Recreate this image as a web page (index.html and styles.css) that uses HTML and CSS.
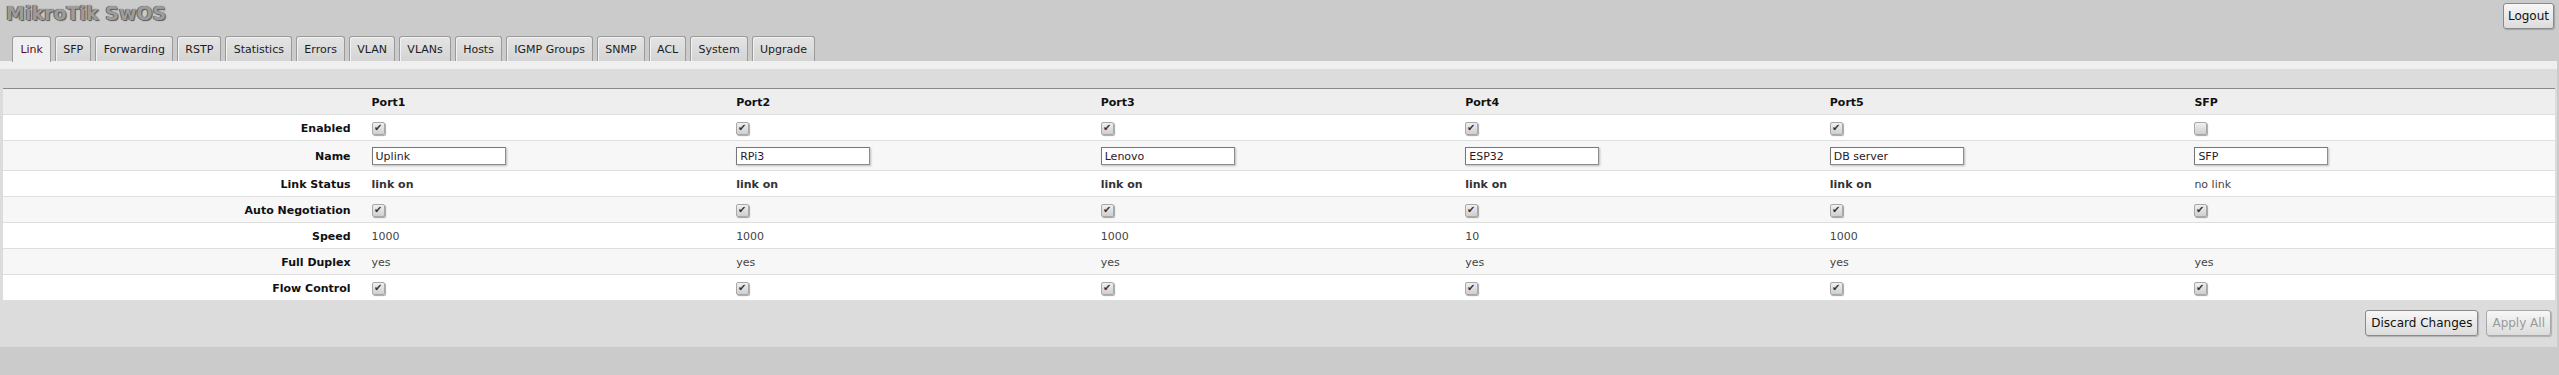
FILE: index.html
```html
<!DOCTYPE html>
<html lang="en">
<head>
  <meta charset="UTF-8" />
  <title>MikroTik SwOS</title>
  <link rel="stylesheet" href="styles.css">
</head>
<body>
  <div class="header">
    <div class="title">MikroTik SwOS</div>
    <button class="btn logout">Logout</button>
  </div>

  <div class="tabs">
    <a class="tab active">Link</a>
    <a class="tab">SFP</a>
    <a class="tab">Forwarding</a>
    <a class="tab">RSTP</a>
    <a class="tab">Statistics</a>
    <a class="tab">Errors</a>
    <a class="tab">VLAN</a>
    <a class="tab">VLANs</a>
    <a class="tab">Hosts</a>
    <a class="tab">IGMP Groups</a>
    <a class="tab">SNMP</a>
    <a class="tab">ACL</a>
    <a class="tab">System</a>
    <a class="tab">Upgrade</a>
  </div>

  <div class="panel">
    <table class="grid">
      <thead>
        <tr>
          <th class="label"></th>
          <th>Port1</th>
          <th>Port2</th>
          <th>Port3</th>
          <th>Port4</th>
          <th>Port5</th>
          <th>SFP</th>
        </tr>
      </thead>
      <tbody>
        <tr>
          <td class="label">Enabled</td>
          <td><input type="checkbox" checked></td>
          <td><input type="checkbox" checked></td>
          <td><input type="checkbox" checked></td>
          <td><input type="checkbox" checked></td>
          <td><input type="checkbox" checked></td>
          <td><input type="checkbox"></td>
        </tr>
        <tr class="name-row">
          <td class="label">Name</td>
          <td><input type="text" class="name" value="Uplink"></td>
          <td><input type="text" class="name" value="RPi3"></td>
          <td><input type="text" class="name" value="Lenovo"></td>
          <td><input type="text" class="name" value="ESP32"></td>
          <td><input type="text" class="name" value="DB server"></td>
          <td><input type="text" class="name" value="SFP"></td>
        </tr>
        <tr>
          <td class="label">Link Status</td>
          <td class="status">link on</td>
          <td class="status">link on</td>
          <td class="status">link on</td>
          <td class="status">link on</td>
          <td class="status">link on</td>
          <td>no link</td>
        </tr>
        <tr>
          <td class="label">Auto Negotiation</td>
          <td><input type="checkbox" checked></td>
          <td><input type="checkbox" checked></td>
          <td><input type="checkbox" checked></td>
          <td><input type="checkbox" checked></td>
          <td><input type="checkbox" checked></td>
          <td><input type="checkbox" checked></td>
        </tr>
        <tr>
          <td class="label">Speed</td>
          <td>1000</td>
          <td>1000</td>
          <td>1000</td>
          <td>10</td>
          <td>1000</td>
          <td></td>
        </tr>
        <tr>
          <td class="label">Full Duplex</td>
          <td>yes</td>
          <td>yes</td>
          <td>yes</td>
          <td>yes</td>
          <td>yes</td>
          <td>yes</td>
        </tr>
        <tr>
          <td class="label">Flow Control</td>
          <td><input type="checkbox" checked></td>
          <td><input type="checkbox" checked></td>
          <td><input type="checkbox" checked></td>
          <td><input type="checkbox" checked></td>
          <td><input type="checkbox" checked></td>
          <td><input type="checkbox" checked></td>
        </tr>
      </tbody>
    </table>

    <div class="actions">
      <button class="btn">Discard Changes</button>
      <button class="btn" disabled>Apply All</button>
    </div>
  </div>
</body>
</html>
```

FILE: styles.css
```css
* { box-sizing: border-box; }

body {
  margin: 0;
  padding-top: 2px;
  background: #cbcbcb;
  font-family: "DejaVu Sans", Verdana, sans-serif;
  font-size: 11px;
  color: #222;
}

.header {
  display: flex;
  justify-content: space-between;
  align-items: flex-start;
  height: 34px;
  padding: 0 5px 0 6px;
}

.title {
  font-size: 19px;
  font-weight: bold;
  line-height: 22px;
  color: #9c9c9c;
  text-shadow: 0 0 1px #4a4a4a, 1px 1px 1px #5a5a5a, -1px 0 0 #7a7a7a;
}

.btn {
  font-family: "DejaVu Sans", Verdana, sans-serif;
  font-size: 12px;
  height: 26px;
  padding: 0 5px;
  color: #111;
  border: 1px solid #8a8a8a;
  border-radius: 3px;
  background: linear-gradient(#f7f7f7, #dcdcdc);
  box-shadow: 1px 1px 1px rgba(0, 0, 0, 0.2);
}

.btn:disabled {
  color: #9a9a9a;
  border-color: #a8a8a8;
}

.logout {
  margin-top: 1px;
  padding: 0 4px;
}

.tabs {
  display: flex;
  gap: 4px;
  padding-left: 12px;
  height: 25px;
}

.tab {
  display: block;
  height: 25px;
  padding: 0 7px 0 7.4px;
  line-height: 25px;
  color: #1c1c1c;
  border: 1px solid #9a9a9a;
  border-bottom: none;
  border-radius: 3px 3px 0 0;
  background: linear-gradient(#e4e4e4, #d4d4d4);
  box-shadow: inset 1px 1px 0 #f2f2f2;
}

.tab.active {
  background: #efefef;
  color: #5a0a1a;
  height: 26px;
  box-shadow: none;
  position: relative;
  z-index: 1;
}

.panel {
  margin-right: 2px;
  background: #dcdcdc;
  border-top: 8px solid #efefef;
  padding: 19px 2px 0 3px;
}

.grid {
  width: 100%;
  table-layout: fixed;
  border-collapse: collapse;
  border-top: 1px solid #8a8a8a;
}

.grid th,
.grid td {
  height: 26px;
  padding: 1px 4px 0;
  text-align: left;
  vertical-align: middle;
  border-bottom: 1px solid #dedede;
  color: #444;
  white-space: nowrap;
}

.grid th {
  background: #eeeeee;
  color: #111;
  font-weight: bold;
}

.grid tbody tr { background: #ffffff; }
.grid tbody tr:nth-child(even) { background: #f7f7f7; }

.grid td.label {
  text-align: right;
  padding-right: 17px;
  font-weight: bold;
  color: #111;
}

.grid td.status {
  font-weight: bold;
  color: #333;
}

.name-row td { height: 30px; }

.name {
  display: block;
  width: 134px;
  height: 18px;
  padding: 0 3px;
  font-family: "DejaVu Sans", Verdana, sans-serif;
  font-size: 11px;
  color: #2a1a2a;
  background: #fff;
  border: 1px solid #8c8c8c;
  border-top-color: #777;
  border-left-color: #777;
  box-shadow: 1px 1px 2px rgba(0, 0, 0, 0.25);
}

input[type="checkbox"] {
  appearance: none;
  -webkit-appearance: none;
  display: block;
  position: relative;
  width: 13px;
  height: 13px;
  margin: 0;
  border: 1px solid #a8a8a8;
  border-radius: 2px;
  background: linear-gradient(#f0f0f0, #cfcfcf);
  box-shadow: 1px 1px 1px rgba(0, 0, 0, 0.35);
}

input[type="checkbox"]:checked::after {
  content: "\2714";
  position: absolute;
  left: 1px;
  top: -1px;
  font-size: 10px;
  line-height: 12px;
  color: #333;
}

.actions {
  display: flex;
  justify-content: flex-end;
  gap: 8px;
  padding: 9px 4px 11px;
}
```
